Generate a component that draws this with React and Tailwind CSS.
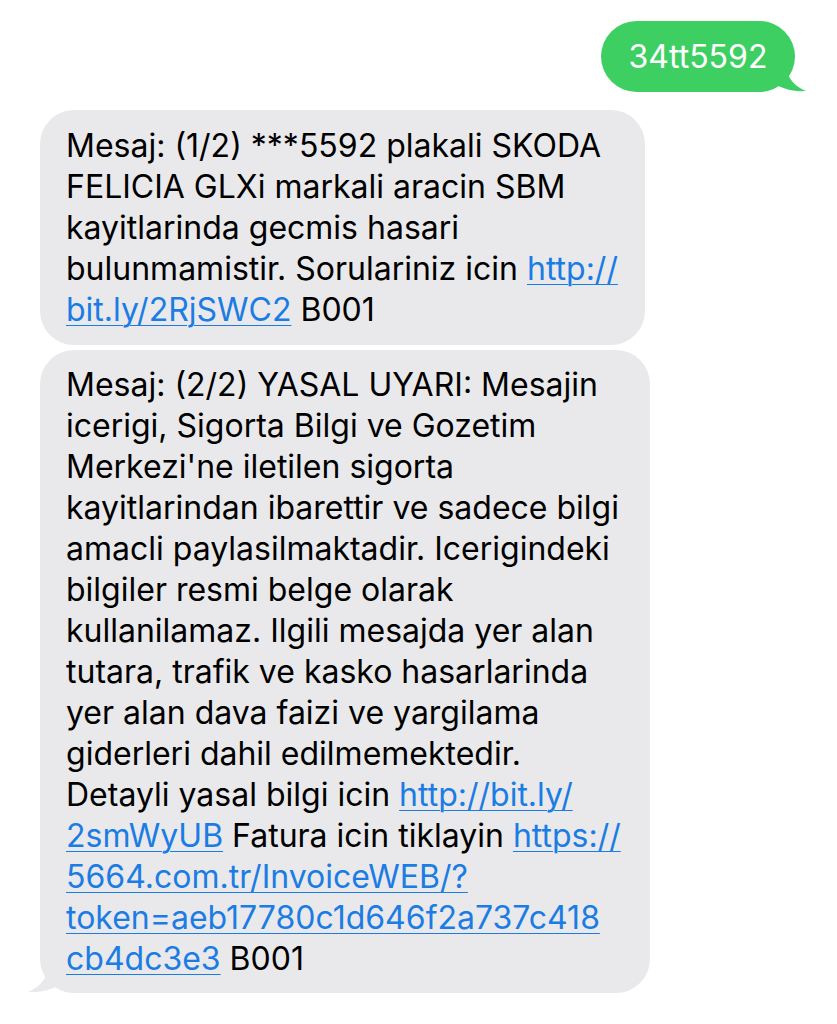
const L = ({ children }) => (
  <span className="text-[#1b7ce4] underline decoration-1 underline-offset-[4px]">{children}</span>
);

function Line({ children }) {
  return <div className="whitespace-nowrap">{children}</div>;
}

function GrayTail() {
  return (
    <svg className="absolute -left-[12px] bottom-0" width="40" height="32" viewBox="0 0 40 32">
      <path d="M20 0 C20 14 16 24 0 31 C14 32 26 28 34 22 L40 0 Z" fill="#e9e9eb" />
    </svg>
  );
}

function GreenTail() {
  return (
    <svg className="absolute -right-[11px] bottom-0" width="40" height="32" viewBox="0 0 40 32">
      <path d="M20 0 C20 14 24 24 40 31 C26 32 14 28 6 22 L0 0 Z" fill="#3ecf63" />
    </svg>
  );
}

export default function App() {
  return (
    <div
      className="w-[837px] h-[1024px] bg-white flex flex-col overflow-hidden text-black"
      style={{ fontFamily: 'Inter, "Liberation Sans", Arial, sans-serif' }}
    >
      <div className="flex justify-end pt-[21px] pr-[42px]">
        <div className="relative w-[194px] h-[71px]">
          <GreenTail />
          <div className="relative flex h-full items-center justify-center rounded-[36px] bg-[#3ecf63] text-[32px] text-white">
            34tt5592
          </div>
        </div>
      </div>

      <div className="ml-[40px] mt-[18px] w-[605px] rounded-[34px] bg-[#e9e9eb] px-[26px] pt-[15px] pb-[15px] text-[32px] leading-[41px]">
        <Line>Mesaj: (1/2) ***5592 plakali SKODA</Line>
        <Line>FELICIA GLXi markali aracin SBM</Line>
        <Line>kayitlarinda gecmis hasari</Line>
        <Line>bulunmamistir. Sorulariniz icin <L>http://</L></Line>
        <Line><L>bit.ly/2RjSWC2</L> B001</Line>
      </div>

      <div className="relative ml-[40px] mt-[5px] w-[610px]">
        <GrayTail />
        <div className="relative rounded-[34px] bg-[#e9e9eb] px-[26px] pt-[14px] pb-[14px] text-[32px] leading-[41px]">
          <Line>Mesaj: (2/2) YASAL UYARI: Mesajin</Line>
          <Line>icerigi, Sigorta Bilgi ve Gozetim</Line>
          <Line>Merkezi'ne iletilen sigorta</Line>
          <Line>kayitlarindan ibarettir ve sadece bilgi</Line>
          <Line>amacli paylasilmaktadir. Icerigindeki</Line>
          <Line>bilgiler resmi belge olarak</Line>
          <Line>kullanilamaz. Ilgili mesajda yer alan</Line>
          <Line>tutara, trafik ve kasko hasarlarinda</Line>
          <Line>yer alan dava faizi ve yargilama</Line>
          <Line>giderleri dahil edilmemektedir.</Line>
          <Line>Detayli yasal bilgi icin <L>http://bit.ly/</L></Line>
          <Line><L>2smWyUB</L> Fatura icin tiklayin <L>https://</L></Line>
          <Line><L>5664.com.tr/InvoiceWEB/?</L></Line>
          <Line><L>token=aeb17780c1d646f2a737c418</L></Line>
          <Line><L>cb4dc3e3</L> B001</Line>
        </div>
      </div>
    </div>
  );
}
